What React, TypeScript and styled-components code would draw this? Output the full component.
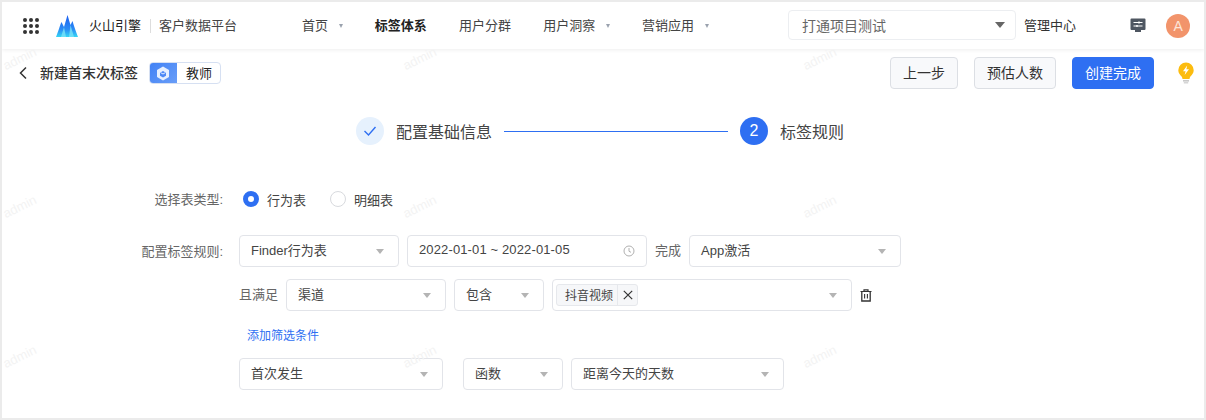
import React from "react";
import styled, { createGlobalStyle } from "styled-components";

const Global = createGlobalStyle`
  html, body { margin: 0; padding: 0; background: #fff; }
  body { font-family: "Liberation Sans", "Noto Sans CJK SC", sans-serif; color: #333; }
  * { box-sizing: border-box; }
`;

const Frame = styled.div`
  position: relative;
  width: 1206px;
  height: 420px;
  border: 2px solid #ebebeb;
  overflow: hidden;
  background: #fff;
`;

const Header = styled.header`
  display: flex;
  align-items: center;
  height: 47px;
  padding-left: 21px;
  background: #fff;
  box-shadow: 0 1px 4px rgba(0, 0, 0, 0.07);
  font-size: 13px;
`;

const Dots = styled.div`
  display: grid;
  grid-template-columns: repeat(3, 4px);
  gap: 2px;
  margin-right: 17px;
`;
const Dot = styled.i`
  width: 4px;
  height: 4px;
  border-radius: 50%;
  background: #333;
`;
const Brand = styled.span`
  margin: 0 0 2px 11px;
  color: #222;
`;
const Divider = styled.span`
  width: 1px;
  height: 14px;
  margin: 0 8px 0 9px;
  background: #ddd;
`;
const Product = styled.span`
  margin-bottom: 2px;
  color: #444;
`;
const Nav = styled.nav`
  display: flex;
  align-items: center;
  gap: 32.25px;
  margin: 0 0 2px 65px;
`;
const NavItem = styled.span<{ $active?: boolean }>`
  display: flex;
  align-items: center;
  color: ${(p) => (p.$active ? "#222" : "#444")};
  font-weight: ${(p) => (p.$active ? 700 : 400)};
`;
const NavCaret = styled.i`
  width: 0;
  height: 0;
  margin: 2px 0 0 10.5px;
  border-left: 2.5px solid transparent;
  border-right: 2.5px solid transparent;
  border-top: 4px solid #9aa2ae;
`;
const ProjectSelect = styled.div`
  display: flex;
  align-items: center;
  justify-content: space-between;
  width: 228px;
  height: 30px;
  margin-left: 79.5px;
  margin-bottom: 2px;
  padding: 0 10px 0 13px;
  border: 1px solid #eceef1;
  border-radius: 4px;
  color: #666;
  font-size: 14px;
`;
const AdminLink = styled.span`
  margin: 0 0 2px 8px;
  color: #333;
`;
const HeaderIcon = styled.span`
  display: flex;
  margin-left: 54px;
`;
const Avatar = styled.span`
  display: flex;
  align-items: center;
  justify-content: center;
  width: 24px;
  height: 24px;
  margin-left: 20px;
  border-radius: 50%;
  background: #f2946b;
  color: #fde4d8;
  font-size: 14px;
`;

const Toolbar = styled.div`
  display: flex;
  align-items: center;
  height: 32px;
  margin-top: 8px;
  padding-left: 16px;
`;
const BackIcon = styled.span`
  display: flex;
  width: 22px;
`;
const PageTitle = styled.span`
  margin-bottom: 2px;
  font-size: 14px;
  color: #333;
  font-weight: 500;
`;
const Badge = styled.span`
  display: flex;
  height: 22px;
  margin-left: 11px;
  border: 1px solid #d6e0f2;
  border-radius: 4px;
  overflow: hidden;
  font-size: 13px;
`;
const BadgeIcon = styled.span`
  display: flex;
  align-items: center;
  justify-content: center;
  width: 28px;
  margin: -1px 0 -1px -1px;
  background: linear-gradient(135deg, #3f80f5, #6a9ef8);
`;
const BadgeText = styled.span`
  display: flex;
  align-items: center;
  padding: 0 8px 2px 9px;
  color: #222;
`;
const Actions = styled.div`
  display: flex;
  align-items: center;
  gap: 16px;
  margin-left: auto;
  margin-right: 10px;
`;
const Button = styled.button<{ $primary?: boolean; $w: number }>`
  width: ${(p) => p.$w}px;
  height: 32px;
  padding: 0 0 2px;
  border-radius: 4px;
  border: 1px solid ${(p) => (p.$primary ? "#2e6ff2" : "#dcdfe4")};
  background: ${(p) => (p.$primary ? "#2e6ff2" : "#f8f9fb")};
  color: ${(p) => (p.$primary ? "#fff" : "#333")};
  font: inherit;
  font-size: 14px;
`;
const Bulb = styled.span`
  display: flex;
  margin-left: 8px;
`;

const Steps = styled.div`
  display: flex;
  align-items: center;
  height: 28px;
  margin-top: 28px;
  padding-left: 354px;
`;
const StepCircle = styled.span<{ $active?: boolean }>`
  display: flex;
  align-items: center;
  justify-content: center;
  width: 28px;
  height: 28px;
  border-radius: 50%;
  background: ${(p) => (p.$active ? "#2e6ff2" : "#e6f1fd")};
  color: #fff;
  font-size: 16px;
`;
const StepLabel = styled.span`
  margin-left: 12px;
  font-size: 16px;
  color: #444;
`;
const StepLine = styled.span`
  width: 224px;
  height: 1px;
  margin: 0 12px;
  background: #2e6ff2;
`;

const Form = styled.div`
  display: flex;
  flex-direction: column;
  margin-top: 44px;
  padding-left: 237px;
  font-size: 13px;
`;
const FormRow = styled.div<{ $mt?: number; $h?: number }>`
  position: relative;
  display: flex;
  align-items: center;
  gap: 8px;
  height: ${(p) => p.$h ?? 32}px;
  margin-top: ${(p) => p.$mt ?? 0}px;
`;
const FormLabel = styled.label`
  position: absolute;
  right: 100%;
  margin: 0 16px 2px 0;
  white-space: nowrap;
  color: #666;
`;
const RadioItem = styled.span`
  display: flex;
  align-items: center;
  margin-right: 16px;
  color: #444;
`;
const RadioFirst = styled(RadioItem)`
  margin-left: 4px;
`;
const RadioMark = styled.i<{ $on?: boolean }>`
  width: 16px;
  height: 16px;
  margin-right: 8px;
  border-radius: 50%;
  background: #fff;
  border: ${(p) => (p.$on ? "5px solid #2e6ff2" : "1px solid #d8dade")};
`;
const Field = styled.div<{ $w: number; $ml?: number }>`
  display: flex;
  align-items: center;
  justify-content: space-between;
  flex: none;
  width: ${(p) => p.$w}px;
  height: 32px;
  margin-left: ${(p) => p.$ml ?? 0}px;
  padding: 0 14px 3px 11px;
  border: 1px solid #e2e4e9;
  border-radius: 4px;
  color: #444;
  background: #fff;
`;
const DateField = styled(Field)`
  padding-right: 11px;
  letter-spacing: 0.13px;
  svg {
    margin-top: 3px;
  }
`;
const TagField = styled(Field)`
  padding-left: 3px;
  padding-bottom: 0;
`;
const Caret = styled.i`
  width: 0;
  height: 0;
  margin-top: 3px;
  border-left: 4px solid transparent;
  border-right: 4px solid transparent;
  border-top: 5px solid #b4b4b4;
`;
const TagCaret = styled(Caret)`
  margin-top: 0;
`;
const DarkCaret = styled.i`
  width: 0;
  height: 0;
  border-left: 5px solid transparent;
  border-right: 5px solid transparent;
  border-top: 6px solid #666;
`;
const Tag = styled.span`
  display: flex;
  align-items: center;
  height: 22px;
  border: 1px solid #e6e8ec;
  border-radius: 3px;
  background: #f6f7f9;
  font-size: 12px;
  color: #444;
`;
const TagText = styled.span`
  padding: 0 4px 1px 8px;
`;
const TagClose = styled.span`
  display: flex;
  align-items: center;
  justify-content: center;
  width: 20px;
  height: 100%;
  border-left: 1px solid #e6e8ec;
`;
const Inline = styled.span`
  margin-bottom: 3px;
  color: #666;
  flex: none;
`;
const AddLink = styled.a`
  margin-left: 8px;
  color: #2e6ff2;
  font-size: 12px;
`;
const Watermark = styled.span<{ $x: number; $y: number }>`
  position: absolute;
  left: ${(p) => p.$x}px;
  top: ${(p) => p.$y}px;
  color: #f3f3f3;
  font-size: 13px;
  transform: rotate(-26deg);
  pointer-events: none;
`;

const Logo = () => (
  <svg width="22" height="22" viewBox="0 0 22 22">
    <defs>
      <linearGradient id="lg" x1="0" y1="0" x2="0" y2="1">
        <stop offset="0" stopColor="#1b5ef0" />
        <stop offset="0.65" stopColor="#2a8cf5" />
        <stop offset="1" stopColor="#35d6f5" />
      </linearGradient>
    </defs>
    <path d="M0 22 C2.5 16 4 10 5.5 7 L8 12 L11.5 0 L14.5 10 L16.5 6 C18 11 20 17 22 22 Z" fill="url(#lg)" />
    <path d="M5 22 L8 12 L10 22 Z M13 22 L14.5 10 L18 22 Z" fill="#7fe6f7" opacity="0.75" />
  </svg>
);

const CubeIcon = () => (
  <svg width="14" height="15" viewBox="0 0 14 15">
    <path d="M7 0.5 L13 4 V11 L7 14.5 L1 11 V4 Z" fill="#e6efff" />
    <path d="M7 5 L10 6.8 V9.8 L7 11.5 L4 9.8 V6.8 Z" fill="#4d88f6" />
    <path d="M4.6 6.6 L7 8 L9.4 6.6" stroke="#e6efff" strokeWidth="1" fill="none" />
  </svg>
);

const Back = () => (
  <svg width="10" height="14" viewBox="0 0 10 14">
    <path d="M8 1.5 L2.5 7 L8 12.5" stroke="#333" strokeWidth="1.5" fill="none" />
  </svg>
);

const Message = () => (
  <svg width="16" height="15" viewBox="0 0 16 15">
    <path d="M1.5 0.5 H14.5 A1 1 0 0 1 15.5 1.5 V11 A1 1 0 0 1 14.5 12 H11 V14 H5 V12 H1.5 A1 1 0 0 1 0.5 11 V1.5 A1 1 0 0 1 1.5 0.5 Z" fill="#4e5661" />
    <path d="M3.5 4.5 H12.5 M3.5 8 H12.5" stroke="#fff" strokeWidth="1.2" />
    <path d="M9 3.5 V5.5 M7 7 V9" stroke="#fff" strokeWidth="1.4" />
  </svg>
);

const BulbIcon = () => (
  <svg width="16" height="22" viewBox="0 0 16 22">
    <path d="M8 0.5 A7.7 7.7 0 0 1 15.7 8.2 C15.7 11 14 12.6 12.4 14.6 C11.8 15.4 11.6 16 11.5 17 H4.5 C4.4 16 4.2 15.4 3.6 14.6 C2 12.6 0.3 11 0.3 8.2 A7.7 7.7 0 0 1 8 0.5 Z" fill="#fcbc0f" />
    <path d="M9.2 3.5 L5 9.2 H7.6 L6.6 13 L11 7.2 H8.4 Z" fill="#fff" />
    <rect x="5" y="18" width="6" height="1.6" fill="#c9c9c9" />
    <rect x="5.8" y="20" width="4.4" height="1.5" fill="#d6d6d6" />
  </svg>
);

const Check = () => (
  <svg width="14" height="12" viewBox="0 0 14 12">
    <path d="M1.5 6 L5.5 10 L12.5 2" stroke="#2e6ff2" strokeWidth="1.4" fill="none" />
  </svg>
);

const Clock = () => (
  <svg width="12" height="12" viewBox="0 0 12 12">
    <circle cx="6" cy="6" r="5" stroke="#b0b0b0" fill="none" />
    <path d="M6 3 V6.3 L8 7.3" stroke="#b0b0b0" fill="none" />
  </svg>
);

const Close = () => (
  <svg width="10" height="10" viewBox="0 0 10 10">
    <path d="M0.8 0.8 L9.2 9.2 M9.2 0.8 L0.8 9.2" stroke="#333" strokeWidth="1.2" />
  </svg>
);

const Trash = () => (
  <svg width="12" height="13" viewBox="0 0 12 13">
    <path d="M0.5 2.5 H11.5 M4 2.5 V0.8 H8 V2.5" stroke="#333" strokeWidth="1.2" fill="none" />
    <path d="M1.8 2.5 V12 H10.2 V2.5" stroke="#333" strokeWidth="1.3" fill="none" />
    <path d="M4.6 5 V9.5 M7.4 5 V9.5" stroke="#333" strokeWidth="1.1" />
  </svg>
);

const marks: [number, number][] = [
  [0, 49], [400, 49], [800, 49],
  [0, 197], [400, 197], [800, 197],
  [0, 347], [400, 347], [800, 347],
];

export default function App() {
  return (
    <>
      <Global />
      <Frame>
        <Header>
          <Dots>
            {Array.from({ length: 9 }).map((_, i) => (
              <Dot key={i} />
            ))}
          </Dots>
          <Logo />
          <Brand>火山引擎</Brand>
          <Divider />
          <Product>客户数据平台</Product>
          <Nav>
            <NavItem>首页<NavCaret /></NavItem>
            <NavItem $active>标签体系</NavItem>
            <NavItem>用户分群</NavItem>
            <NavItem>用户洞察<NavCaret /></NavItem>
            <NavItem>营销应用<NavCaret /></NavItem>
          </Nav>
          <ProjectSelect>
            打通项目测试
            <DarkCaret />
          </ProjectSelect>
          <AdminLink>管理中心</AdminLink>
          <HeaderIcon><Message /></HeaderIcon>
          <Avatar>A</Avatar>
        </Header>

        <Toolbar>
          <BackIcon><Back /></BackIcon>
          <PageTitle>新建首末次标签</PageTitle>
          <Badge>
            <BadgeIcon><CubeIcon /></BadgeIcon>
            <BadgeText>教师</BadgeText>
          </Badge>
          <Actions>
            <Button $w={68}>上一步</Button>
            <Button $w={82}>预估人数</Button>
            <Button $w={82} $primary>创建完成</Button>
            <Bulb><BulbIcon /></Bulb>
          </Actions>
        </Toolbar>

        <Steps>
          <StepCircle><Check /></StepCircle>
          <StepLabel>配置基础信息</StepLabel>
          <StepLine />
          <StepCircle $active>2</StepCircle>
          <StepLabel>标签规则</StepLabel>
        </Steps>

        <Form>
          <FormRow $h={20}>
            <FormLabel>选择表类型:</FormLabel>
            <RadioFirst><RadioMark $on />行为表</RadioFirst>
            <RadioItem><RadioMark />明细表</RadioItem>
          </FormRow>

          <FormRow $mt={26}>
            <FormLabel>配置标签规则:</FormLabel>
            <Field $w={160}>Finder行为表<Caret /></Field>
            <DateField $w={240}>2022-01-01 ~ 2022-01-05<Clock /></DateField>
            <Inline>完成</Inline>
            <Field $w={212}>App激活<Caret /></Field>
          </FormRow>

          <FormRow $mt={12}>
            <Inline>且满足</Inline>
            <Field $w={160}>渠道<Caret /></Field>
            <Field $w={90}>包含<Caret /></Field>
            <TagField $w={300}>
              <Tag>
                <TagText>抖音视频</TagText>
                <TagClose><Close /></TagClose>
              </Tag>
              <TagCaret />
            </TagField>
            <Trash />
          </FormRow>

          <FormRow $mt={13} $h={20}>
            <AddLink>添加筛选条件</AddLink>
          </FormRow>

          <FormRow $mt={14}>
            <Field $w={204}>首次发生<Caret /></Field>
            <Field $w={100} $ml={12}>函数<Caret /></Field>
            <Field $w={213}>距离今天的天数<Caret /></Field>
          </FormRow>
        </Form>

        {marks.map(([x, y]) => (
          <Watermark key={`${x}-${y}`} $x={x} $y={y} aria-hidden>admin</Watermark>
        ))}
      </Frame>
    </>
  );
}
